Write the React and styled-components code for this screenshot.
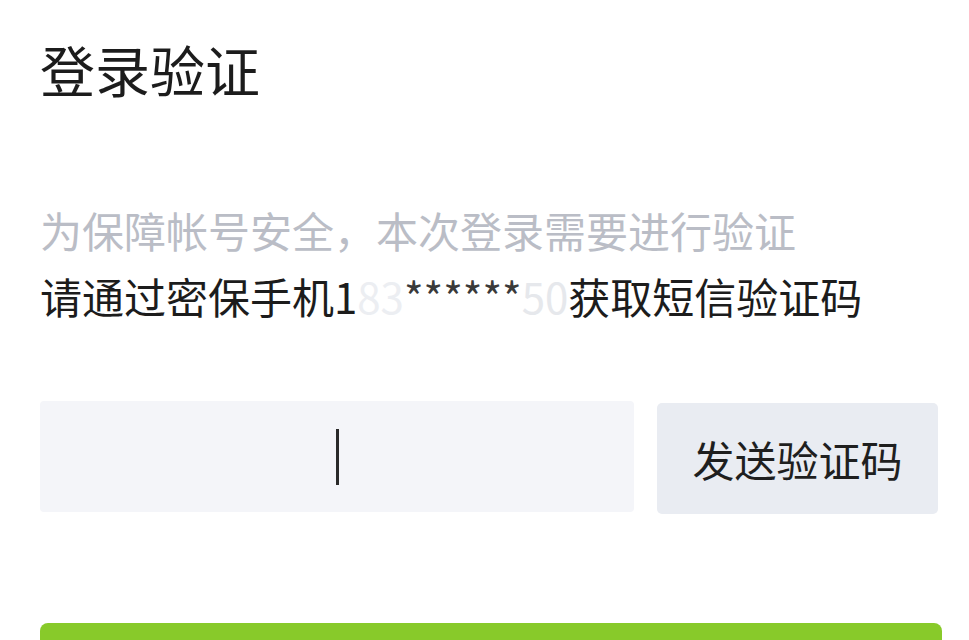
import React from 'react';
import styled, { createGlobalStyle } from 'styled-components';

const GlobalStyle = createGlobalStyle`
    html, body {
        margin: 0;
        padding: 0;
        background: #ffffff;
        overflow: hidden;
    }

    body {
        font-family: "Noto Sans CJK SC", "Noto Sans", sans-serif;
    }
`;

const Page = styled.div`
    width: 902px;
    padding: 35px 0 0 40px;
`;

const Title = styled.h1`
    margin: 0;
    font-size: 55px;
    font-weight: 400;
    line-height: 66px;
    color: #1c1c1c;
`;

const Hint = styled.p`
    margin: 0;
    font-size: 42px;
    line-height: 66px;
    color: ${props => (props.muted ? '#babdc6' : '#1c1c1c')};
    white-space: nowrap;
`;

const Intro = styled.div`
    margin-top: 96px;
`;

const Masked = styled.span`
    color: ${props => props.tone};
`;

const CodeRow = styled.div`
    display: flex;
    align-items: flex-start;
    gap: 23px;
    margin-top: 72px;
`;

const CodeInput = styled.div`
    display: flex;
    align-items: center;
    justify-content: center;
    width: 594px;
    height: 111px;
    border-radius: 4px;
    background: #f4f5f9;
`;

const Caret = styled.span`
    display: block;
    width: 3px;
    height: 56px;
    background: #2a2a2a;
`;

const SendButton = styled.button`
    display: flex;
    align-items: center;
    justify-content: center;
    width: 281px;
    height: 111px;
    margin-top: 2px;
    padding: 0;
    border: none;
    border-radius: 5px;
    background: #e9ecf2;
    font-family: inherit;
    font-size: 42px;
    color: #1f1f1f;
`;

const SubmitButton = styled.div`
    width: 902px;
    height: 111px;
    margin-top: 109px;
    border-radius: 8px;
    background: #88ca2a;
`;

export default function App() {
    return (
        <Page>
            <GlobalStyle />
            <Title>登录验证</Title>
            <Intro>
                <Hint muted>为保障帐号安全，本次登录需要进行验证</Hint>
                <Hint>
                    请通过密保手机1
                    <Masked tone="#eceef2">83</Masked>
                    <Masked tone="#3a3a3a">******</Masked>
                    <Masked tone="#e6e8ec">50</Masked>
                    获取短信验证码
                </Hint>
            </Intro>
            <CodeRow>
                <CodeInput>
                    <Caret />
                </CodeInput>
                <SendButton>发送验证码</SendButton>
            </CodeRow>
            <SubmitButton />
        </Page>
    );
}
